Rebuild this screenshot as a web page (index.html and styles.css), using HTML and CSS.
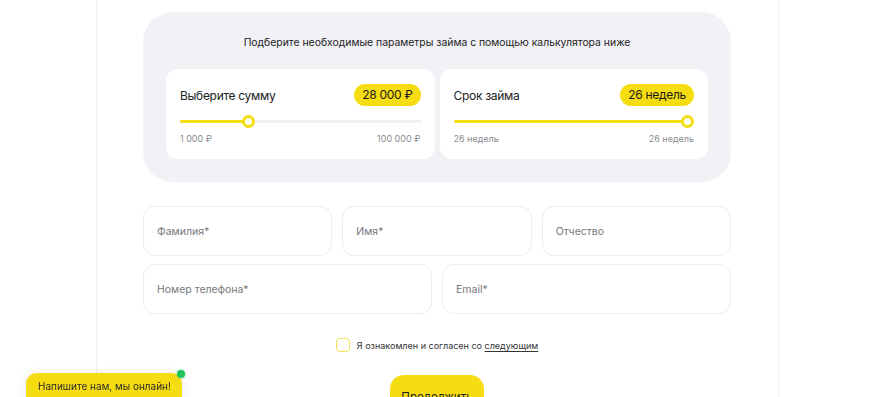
FILE: index.html
```html
<!DOCTYPE html>
<html lang="ru">
<head>
<meta charset="utf-8">
<link rel="stylesheet" href="styles.css">
</head>
<body>
<div class="page">
  <section class="calc">
    <p class="calc-title">Подберите необходимые параметры займа с помощью калькулятора ниже</p>
    <div class="cards">
      <div class="card">
        <div class="card-head">
          <span class="card-label">Выберите сумму</span>
          <span class="badge">28 000 ₽</span>
        </div>
        <div class="slider">
          <div class="fill" style="width:28.2%"></div>
          <div class="thumb" style="left:28.2%"></div>
        </div>
        <div class="limits"><span>1 000 ₽</span><span>100 000 ₽</span></div>
      </div>
      <div class="card">
        <div class="card-head">
          <span class="card-label">Срок займа</span>
          <span class="badge">26 недель</span>
        </div>
        <div class="slider">
          <div class="fill" style="width:97%"></div>
          <div class="thumb" style="left:97%"></div>
        </div>
        <div class="limits"><span>26 недель</span><span>26 недель</span></div>
      </div>
    </div>
  </section>
  <form class="form">
    <div class="row row3">
      <div class="field">Фамилия*</div>
      <div class="field">Имя*</div>
      <div class="field">Отчество</div>
    </div>
    <div class="row row2">
      <div class="field">Номер телефона*</div>
      <div class="field">Email*</div>
    </div>
    <label class="agree"><span class="check"></span><span>Я ознакомлен и согласен со <u>следующим</u></span></label>
    <div class="submit-wrap"><button type="button" class="submit">Продолжить</button></div>
  </form>
</div>
<div class="chat">Напишите нам, мы онлайн!<span class="dot"></span></div>
</body>
</html>
```
FILE: styles.css
```css
* { box-sizing: border-box; }
html, body { margin: 0; padding: 0; background: #fff; height: 397px; overflow: hidden; }
body { font-family: Inter, "Noto Sans", sans-serif; color: #1f1f24; }
.page {
  margin-left: 96px;
  width: 683px;
  min-height: 397px;
  border-left: 1px solid #f1f1f4;
  border-right: 1px solid #f1f1f4;
  padding: 12px 47px 0 46px;
}
.calc {
  background: #f1f1f6;
  border-radius: 30px;
  padding: 23px 23px 23px;
}
.calc-title {
  margin: 0 0 18px;
  text-align: center;
  font-size: 10.4px;
  line-height: 16px;
  color: #222;
}
.cards { display: grid; grid-template-columns: 1fr 1fr; gap: 5px; }
.card {
  background: #fff;
  border-radius: 12px;
  padding: 15px 14px 13px;
}
.card-head { display: flex; justify-content: space-between; align-items: center; height: 22px; }
.card-label { font-size: 12px; letter-spacing: -0.3px; color: #222; }
.badge {
  background: #f6dd12;
  border-radius: 11px;
  height: 22px;
  padding: 0 8px;
  font-size: 12px;
  letter-spacing: -0.3px;
  line-height: 22px;
  color: #1a1a1a;
}
.slider {
  position: relative;
  height: 3px;
  background: #f0f0f3;
  margin: 14px 0 0;
}
.fill { height: 3px; background: #f6dd12; border-radius: 2px; }
.thumb {
  position: absolute;
  top: -5px;
  width: 13px; height: 13px;
  margin-left: -6px;
  border: 3px solid #f6dd12;
  background: #fff;
  border-radius: 50%;
}
.limits {
  display: flex; justify-content: space-between;
  margin-top: 9px;
  font-size: 9px; line-height: 14px;
  color: #8a8a90;
}
.form { padding-top: 24px; }
.row { display: grid; gap: 10px; margin-bottom: 8px; }
.row3 { grid-template-columns: 1fr 1fr 1fr; }
.row2 { grid-template-columns: 1fr 1fr; }
.field {
  height: 50px;
  border: 1px solid #ececf1;
  border-radius: 12px;
  padding: 0 13px;
  display: flex; align-items: center;
  font-size: 10.5px;
  color: #77777c;
}
.agree {
  display: flex; justify-content: center; align-items: center; gap: 7px;
  margin-top: 24px;
  font-size: 9px; color: #333;
}
.agree u { text-underline-offset: 2px; }
.check {
  width: 14px; height: 14px;
  border: 1.5px solid #f3de5a;
  border-radius: 4px;
}
.submit-wrap { display: flex; justify-content: center; margin-top: 23px; }
.submit {
  width: 94px; height: 44px;
  border: 0;
  background: #f6dd12;
  border-radius: 14px;
  font-family: inherit;
  font-size: 11.5px;
  color: #1f1f24;
  padding: 0;
}
.chat {
  position: fixed;
  left: 26px; top: 373px;
  width: 156px; height: 40px;
  background: #f6dd12;
  border-radius: 11px;
  padding: 6px 0 0 12px;
  font-size: 10px; line-height: 14px;
  color: #2a2a2a;
  box-shadow: 0 0 10px rgba(0,0,0,0.1);
}
.dot {
  position: absolute;
  right: -3px; top: -3px;
  width: 8px; height: 8px;
  border-radius: 50%;
  background: #1fc45b;
  box-shadow: 0 0 3px rgba(31,196,91,0.6);
}
```
